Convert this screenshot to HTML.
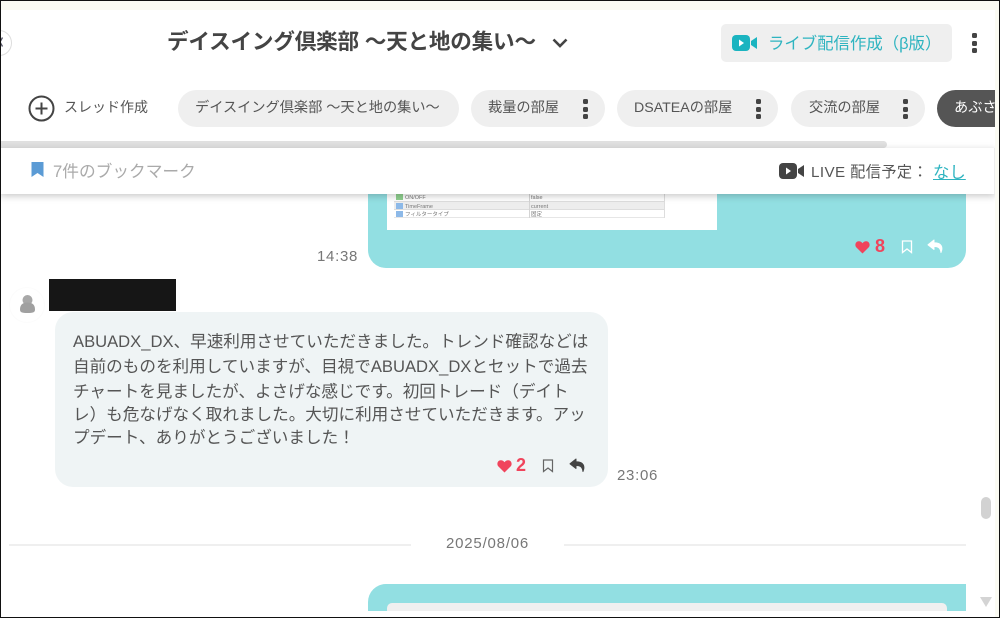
<!DOCTYPE html>
<html lang="ja"><head><meta charset="utf-8"><title>デイスイング倶楽部</title>
<style>
html,body{margin:0;padding:0;width:1000px;height:619px;overflow:hidden;background:#fff}
*{box-sizing:border-box}
body{font-family:"Liberation Sans","Noto Sans CJK JP",sans-serif;color:#555;position:relative}
.a{position:absolute;white-space:nowrap}
.pill{position:absolute;top:90px;height:37px;border-radius:19px;background:#efefef;font-size:14.2px;line-height:37px;color:#555;white-space:nowrap}
.dots{position:absolute;width:5px}
.dots i{display:block;width:5px;height:5px;border-radius:1.5px;background:#444;margin-bottom:2.5px}
.line{position:absolute;white-space:nowrap;left:73px;font-size:16.6px;color:#555;height:26px;line-height:26px}
.t{position:absolute;font-size:5.5px;line-height:8px;color:#777;white-space:nowrap}
.num{position:absolute;font-weight:bold;color:#f0445c;white-space:nowrap}
</style></head><body>
<div class="a" style="left:0;top:0;width:1000px;height:10px;background:#fbfbf3"></div>

<!-- message top teal -->
<div class="a" style="left:368px;top:180px;width:598px;height:88px;background:#92dfe2;border-radius:0 0 18px 18px"></div>
<div class="a" style="left:387px;top:180px;width:330px;height:50px;background:#fff"></div>
<div class="a" style="left:394px;top:193px;width:271px;height:9px;background:#fff;border-bottom:1px solid #ddd"></div>
<div class="a" style="left:394px;top:202px;width:271px;height:8px;background:#ededed;border-bottom:1px solid #ddd"></div>
<div class="a" style="left:394px;top:210px;width:271px;height:8px;background:#fff;border-bottom:1px solid #e6e6e6"></div>
<div class="a" style="left:664px;top:193px;width:1px;height:25px;background:#ddd"></div>
<div class="a" style="left:529px;top:193px;width:1px;height:25px;background:#d4d4d4"></div>
<div class="a" style="left:396px;top:194px;width:7px;height:6px;background:#8fd08f"></div>
<div class="a" style="left:396px;top:203px;width:7px;height:6px;background:#8db9e8"></div>
<div class="a" style="left:396px;top:211px;width:7px;height:6px;background:#8db9e8"></div>
<div class="t" style="left:405px;top:194px">ON/OFF</div>
<div class="t" style="left:405px;top:203px">TimeFrame</div>
<div class="t" style="left:405px;top:211px">フィルタータイプ</div>
<div class="t" style="left:531px;top:194px">false</div>
<div class="t" style="left:531px;top:203px">current</div>
<div class="t" style="left:531px;top:211px">固定</div>

<svg class="a" style="left:855px;top:240px" width="15" height="14" viewBox="0 0 15 14"><path d="M7.500 13.500L1.200 7.200C-.4 5.400.3 1.500 3.600 1.200 5.400 1.100 6.800 2 7.500 3.200 8.200 2 9.600 1.100 11.400 1.200 14.700 1.500 15.400 5.400 13.800 7.200Z" fill="#f0445c"/></svg>
<div class="num" style="left:875px;top:235px;font-size:18px;line-height:22px">8</div>
<svg class="a" style="left:901px;top:240px" width="12" height="14" viewBox="0 0 12 14"><path d="M1.500 1h9v11.500L6 9 1.500 12.500Z" fill="none" stroke="#fff" stroke-width="1.300"/></svg>
<svg class="a" style="left:927px;top:239px" width="17" height="15" viewBox="0 0 17 15"><path d="M7 1L1 5.800 7 10.500V7.500C11 7.300 13.300 8.500 14 13.500 15.800 9 15.500 3.800 7 3.800Z" fill="#fff" stroke="#fff" stroke-width="1" stroke-linejoin="round"/></svg>
<div class="a" style="left:317px;top:248px;font-size:15px;line-height:18px;color:#777;letter-spacing:.7px">14:38</div>

<!-- avatar -->
<svg class="a" style="left:9px;top:287px" width="36" height="36" viewBox="0 0 36 36"><circle cx="18" cy="18" r="17.500" fill="#fff" stroke="#fcfcfc"/><circle cx="18.500" cy="13" r="5" fill="#a8a8a8"/><path d="M11 22.500c0-5 3-7 7.500-7s7.500 2 7.500 7c0 3-2 3.500-7.500 3.500S11 25.500 11 22.500Z" fill="#a0a0a0"/></svg>
<div class="a" style="left:49px;top:279px;width:127px;height:32px;background:#161616"></div>

<!-- message 2 -->
<div class="a" style="left:55px;top:312px;width:553px;height:175px;background:#eff4f5;border-radius:18px"></div>
<div class="line" style="top:329px">ABUADX_DX、早速利用させていただきました。トレンド確認などは</div>
<div class="line" style="top:354px">自前のものを利用していますが、目視でABUADX_DXとセットで過去</div>
<div class="line" style="top:379px">チャートを見ましたが、よさげな感じです。初回トレード（デイト</div>
<div class="line" style="top:402px">レ）も危なげなく取れました。大切に利用させていただきます。アッ</div>
<div class="line" style="top:425px">プデート、ありがとうございました！</div>
<svg class="a" style="left:497px;top:459px" width="15" height="14" viewBox="0 0 15 14"><path d="M7.500 13.500L1.200 7.200C-.4 5.400.3 1.500 3.600 1.200 5.400 1.100 6.800 2 7.500 3.200 8.200 2 9.600 1.100 11.400 1.200 14.700 1.500 15.400 5.400 13.800 7.200Z" fill="#f0445c"/></svg>
<div class="num" style="left:516px;top:454px;font-size:18px;line-height:22px">2</div>
<svg class="a" style="left:542px;top:459px" width="12" height="14" viewBox="0 0 12 14"><path d="M1.500 1h9v11.500L6 9 1.500 12.500Z" fill="none" stroke="#666" stroke-width="1.200"/></svg>
<svg class="a" style="left:569px;top:458px" width="17" height="15" viewBox="0 0 17 15"><path d="M7 1L1 5.800 7 10.500V7.500C11 7.300 13.300 8.500 14 13.500 15.800 9 15.500 3.800 7 3.800Z" fill="#444" stroke="#444" stroke-width="1" stroke-linejoin="round"/></svg>
<div class="a" style="left:617px;top:467px;font-size:15px;line-height:18px;color:#777;letter-spacing:.7px">23:06</div>

<!-- date -->
<div class="a" style="left:9px;top:544px;width:402px;height:2px;background:#efefef"></div>
<div class="a" style="left:564px;top:544px;width:402px;height:2px;background:#efefef"></div>
<div class="a" style="left:446px;top:535px;font-size:15px;line-height:18px;color:#777;letter-spacing:.8px">2025/08/06</div>

<!-- bottom teal -->
<div class="a" style="left:368px;top:584px;width:598px;height:27px;background:#92dfe2;border-radius:18px 0 0 0"></div>
<div class="a" style="left:387px;top:603px;width:560px;height:8px;background:#f0f0f0;border-radius:5px 5px 0 0"></div>

<!-- scrollbar -->
<div class="a" style="left:981px;top:497px;width:10px;height:22px;background:#d2d2d2;border-radius:5px"></div>
<div class="a" style="left:980px;top:597px;width:0;height:0;border-left:6px solid transparent;border-right:6px solid transparent;border-top:10px solid #d4d4d4"></div>

<!-- header -->
<div class="a" style="left:0;top:10px;width:1000px;height:131px;background:#fff"></div>
<div class="a" style="left:-14px;top:30px;width:26px;height:26px;border-radius:50%;border:1px solid #ddd;background:#fff"></div>
<svg class="a" style="left:0;top:36px" width="4" height="12" viewBox="0 0 4 12"><path d="M2.500 1.500L0 6l2.500 4.500" fill="none" stroke="#556" stroke-width="1.300"/></svg>
<div class="a" style="left:167px;top:28px;font-size:21.600px;line-height:28px;font-weight:bold;color:#444;letter-spacing:-.2px">デイスイング倶楽部 ～天と地の集い～</div>
<svg class="a" style="left:551px;top:37px" width="18" height="12" viewBox="0 0 18 12"><path d="M2.500 2.500L9 9l6.500-6.500" fill="none" stroke="#444" stroke-width="2.600"/></svg>
<div class="a" style="left:721px;top:24px;width:231px;height:38px;background:#efefef;border-radius:5px"></div>
<svg class="a" style="left:732px;top:34px" width="26" height="18" viewBox="0 0 26 18"><rect x="0" y="1" width="18" height="16" rx="4" fill="#1bb4c0"/><path d="M7 5.500L12 9 7 12.500Z" fill="#fff"/><path d="M19 7l6-4v12l-6-4Z" fill="#1bb4c0"/></svg>
<div class="a" style="left:768px;top:32px;font-size:16.400px;line-height:24px;color:#2eb4c0">ライブ配信作成（β版）</div>
<div class="dots" style="left:972px;top:33px"><i></i><i></i><i></i></div>

<svg class="a" style="left:28px;top:95px" width="27" height="27" viewBox="0 0 27 27"><circle cx="13.500" cy="13.500" r="12" fill="none" stroke="#444" stroke-width="2"/><path d="M13.500 7.500v12M7.500 13.500h12" stroke="#444" stroke-width="2"/></svg>
<div class="a" style="left:64px;top:97px;font-size:14px;line-height:20px;color:#555">スレッド作成</div>

<div class="pill" style="left:178px;width:281px;padding-left:17px">デイスイング倶楽部 ～天と地の集い～</div>
<div class="pill" style="left:471px;width:134px;padding-left:17px">裁量の部屋<div class="dots" style="left:111.500px;top:9px"><i></i><i></i><i></i></div></div>
<div class="pill" style="left:617px;width:161px;padding-left:17px">DSATEAの部屋<div class="dots" style="left:139px;top:9px"><i></i><i></i><i></i></div></div>
<div class="pill" style="left:791px;width:134px;padding-left:18px">交流の部屋<div class="dots" style="left:111.500px;top:9px"><i></i><i></i><i></i></div></div>
<div class="a" style="left:937px;top:90px;width:58px;height:37px;background:#555;border-radius:19px 0 0 19px;color:#fff;font-size:14.200px;line-height:37px;padding-left:17px;overflow:hidden">あぶさ</div>

<div class="a" style="left:1px;top:141px;width:886px;height:7px;background:#e0e0e0;border-radius:0 4px 4px 0"></div>

<!-- bookmark bar -->
<div class="a" style="left:0;top:148px;width:995px;height:46px;background:#fff;box-shadow:0 2px 7px rgba(0,0,0,.22);border-right:1px solid #eee"></div>
<svg class="a" style="left:31px;top:162px" width="13" height="15" viewBox="0 0 13 15"><path d="M.5 0h12v15L6.500 11 .5 15Z" fill="#5b9bd5"/></svg>
<div class="a" style="left:53px;top:161px;font-size:16.700px;line-height:22px;color:#aaa">7件のブックマーク</div>
<svg class="a" style="left:779px;top:162px" width="26" height="18" viewBox="0 0 26 18"><rect x="0" y="1" width="18" height="16" rx="4" fill="#444"/><path d="M7 5.500L12 9 7 12.500Z" fill="#fff"/><path d="M19 7l6-4v12l-6-4Z" fill="#444"/></svg>
<div class="a" style="left:811px;top:162px;font-size:15.200px;line-height:22px;color:#555;letter-spacing:.4px">LIVE 配信予定：</div>
<div class="a" style="left:933px;top:162px;font-size:16.400px;line-height:22px;color:#2eb4c0;text-decoration:underline">なし</div>

<!-- right strip & screenshot frame -->
<div class="a" style="left:995px;top:0;width:4px;height:618px;background:#fbfbf3"></div>
<div class="a" style="left:0;top:0;width:1000px;height:618px;border:1px solid #111;pointer-events:none"></div>
</body></html>
